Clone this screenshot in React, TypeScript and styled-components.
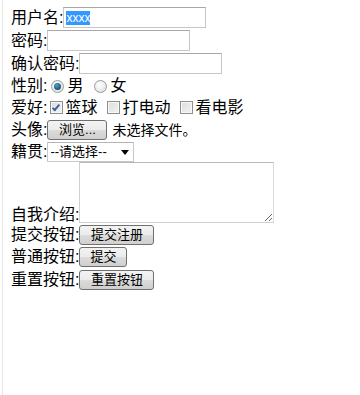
import { useEffect, useRef } from "react";
import styled, { createGlobalStyle } from "styled-components";

const GlobalStyle = createGlobalStyle`
  html, body {
    margin: 0;
    padding: 0;
    background: #ffffff;
  }
  body {
    font-family: "Liberation Sans", "Noto Sans CJK SC", sans-serif;
    color: #000000;
  }
  ::selection {
    background: #3399ff;
    color: #ffffff;
  }
`;

const Page = styled.div`
  box-sizing: border-box;
  height: 395px;
  margin-left: 2px;
  border-left: 1px solid #e6e6e6;
  padding: 6px 0 0 8px;
  font-size: 16px;
  line-height: 1;
`;

const Form = styled.form`
  display: flex;
  flex-direction: column;
  margin: 0;
`;

const Row = styled.div<{ h: number; end?: boolean }>`
  display: flex;
  align-items: ${(p) => (p.end ? "flex-end" : "center")};
  height: ${(p) => p.h}px;
  white-space: nowrap;
`;

const Label = styled.span`
  font-size: 16px;
`;

const TextInput = styled.input`
  box-sizing: border-box;
  width: 143px;
  height: 21px;
  margin: 0;
  padding: 1px 2px;
  border: 1px solid #c6c6c6;
  border-top-color: #a8a8a8;
  font-family: "Liberation Sans", sans-serif;
  font-size: 12px;
  outline: none;
  background: #fff;
`;

const Radio = styled.input.attrs({ type: "radio" })`
  appearance: none;
  box-sizing: border-box;
  width: 13px;
  height: 13px;
  margin: 0 3px 0 4px;
  border-radius: 50%;
  border: 1px solid #9a9a9a;
  background: radial-gradient(circle at 40% 35%, #ffffff 0%, #e6e6e6 70%, #cfcfcf 100%);
  position: relative;
  &:checked::after {
    content: "";
    position: absolute;
    left: 2px;
    top: 2px;
    width: 7px;
    height: 7px;
    border-radius: 50%;
    background: radial-gradient(circle at 40% 35%, #4fa3c4 0%, #1d5f80 60%, #123f58 100%);
  }
`;

const Check = styled.input.attrs({ type: "checkbox" })`
  appearance: none;
  box-sizing: border-box;
  width: 13px;
  height: 13px;
  margin: 0 2px 0 3px;
  border: 1px solid #8f8f8f;
  background: linear-gradient(135deg, #dcdcdc 0%, #f4f4f4 100%);
  box-shadow: inset 0 0 0 1px #f8f8f8;
  position: relative;
  &:checked::after {
    content: "";
    position: absolute;
    left: 3px;
    top: 1px;
    width: 2px;
    height: 6px;
    border: solid #3a64a0;
    border-width: 0 2px 2px 0;
    transform: rotate(40deg);
  }
`;

const Option = styled.label`
  display: flex;
  align-items: center;
  margin-right: 7px;
`;

const Button = styled.button<{ w: number }>`
  box-sizing: border-box;
  width: ${(p) => p.w}px;
  height: 20px;
  margin: 0;
  padding: 0;
  border: 1px solid #707070;
  border-radius: 3px;
  background: linear-gradient(#f3f3f3 0%, #ebebeb 50%, #dcdcdc 51%, #cfcfcf 100%);
  font-family: "Liberation Sans", "Noto Sans CJK SC", sans-serif;
  font-size: 13px;
  line-height: 18px;
  color: #000;
`;

const FileNote = styled.span`
  margin-left: 5px;
  font-size: 14px;
`;

const SelectWrap = styled.span`
  position: relative;
  display: inline-block;
  &::after {
    content: "";
    position: absolute;
    right: 5px;
    top: 8px;
    border-left: 4px solid transparent;
    border-right: 4px solid transparent;
    border-top: 5px solid #000;
    pointer-events: none;
  }
`;

const Select = styled.select`
  appearance: none;
  box-sizing: border-box;
  width: 87px;
  height: 20px;
  margin: 0;
  padding: 0 0 0 2px;
  border: 1px solid #c8c8c8;
  border-top-color: #b4b4b4;
  border-radius: 0;
  background: #fff;
  font-family: "Liberation Sans", "Noto Sans CJK SC", sans-serif;
  font-size: 13px;
  color: #000;
`;

const TextArea = styled.textarea`
  box-sizing: border-box;
  width: 195px;
  height: 61px;
  margin: 0;
  border: 1px solid #d0d0d0;
  border-top-color: #b8b8b8;
  border-right-color: #dcdcdc;
  font-family: "Liberation Sans", sans-serif;
`;

export default function App() {
  const nameRef = useRef<HTMLInputElement>(null);

  useEffect(() => {
    const el = nameRef.current;
    if (el) {
      el.focus();
      el.select();
    }
  }, []);

  return (
    <>
      <GlobalStyle />
      <Page>
        <Form onSubmit={(e) => e.preventDefault()}>
          <Row h={23}>
            <Label>用户名:</Label>
            <TextInput ref={nameRef} defaultValue="xxxx" />
          </Row>
          <Row h={23}>
            <Label>密码:</Label>
            <TextInput type="password" />
          </Row>
          <Row h={23}>
            <Label>确认密码:</Label>
            <TextInput type="password" />
          </Row>
          <Row h={22}>
            <Label>性别:</Label>
            <Option>
              <Radio name="sex" defaultChecked />
              男
            </Option>
            <Option>
              <Radio name="sex" />
              女
            </Option>
          </Row>
          <Row h={21}>
            <Label>爱好:</Label>
            <Option>
              <Check defaultChecked />
              篮球
            </Option>
            <Option>
              <Check />
              打电动
            </Option>
            <Option>
              <Check />
              看电影
            </Option>
          </Row>
          <Row h={23}>
            <Label>头像:</Label>
            <Button type="button" w={60}>
              浏览...
            </Button>
            <FileNote>未选择文件。</FileNote>
          </Row>
          <Row h={21}>
            <Label>籍贯:</Label>
            <SelectWrap>
              <Select defaultValue="">
                <option value="">--请选择--</option>
                <option value="bj">北京</option>
                <option value="sh">上海</option>
              </Select>
            </SelectWrap>
          </Row>
          <Row h={61} end>
            <Label>自我介绍:</Label>
            <TextArea />
          </Row>
          <Row h={23}>
            <Label>提交按钮:</Label>
            <Button type="submit" w={75}>
              提交注册
            </Button>
          </Row>
          <Row h={22}>
            <Label>普通按钮:</Label>
            <Button type="button" w={48}>
              提交
            </Button>
          </Row>
          <Row h={23}>
            <Label>重置按钮:</Label>
            <Button type="reset" w={75}>
              重置按钮
            </Button>
          </Row>
        </Form>
      </Page>
    </>
  );
}
